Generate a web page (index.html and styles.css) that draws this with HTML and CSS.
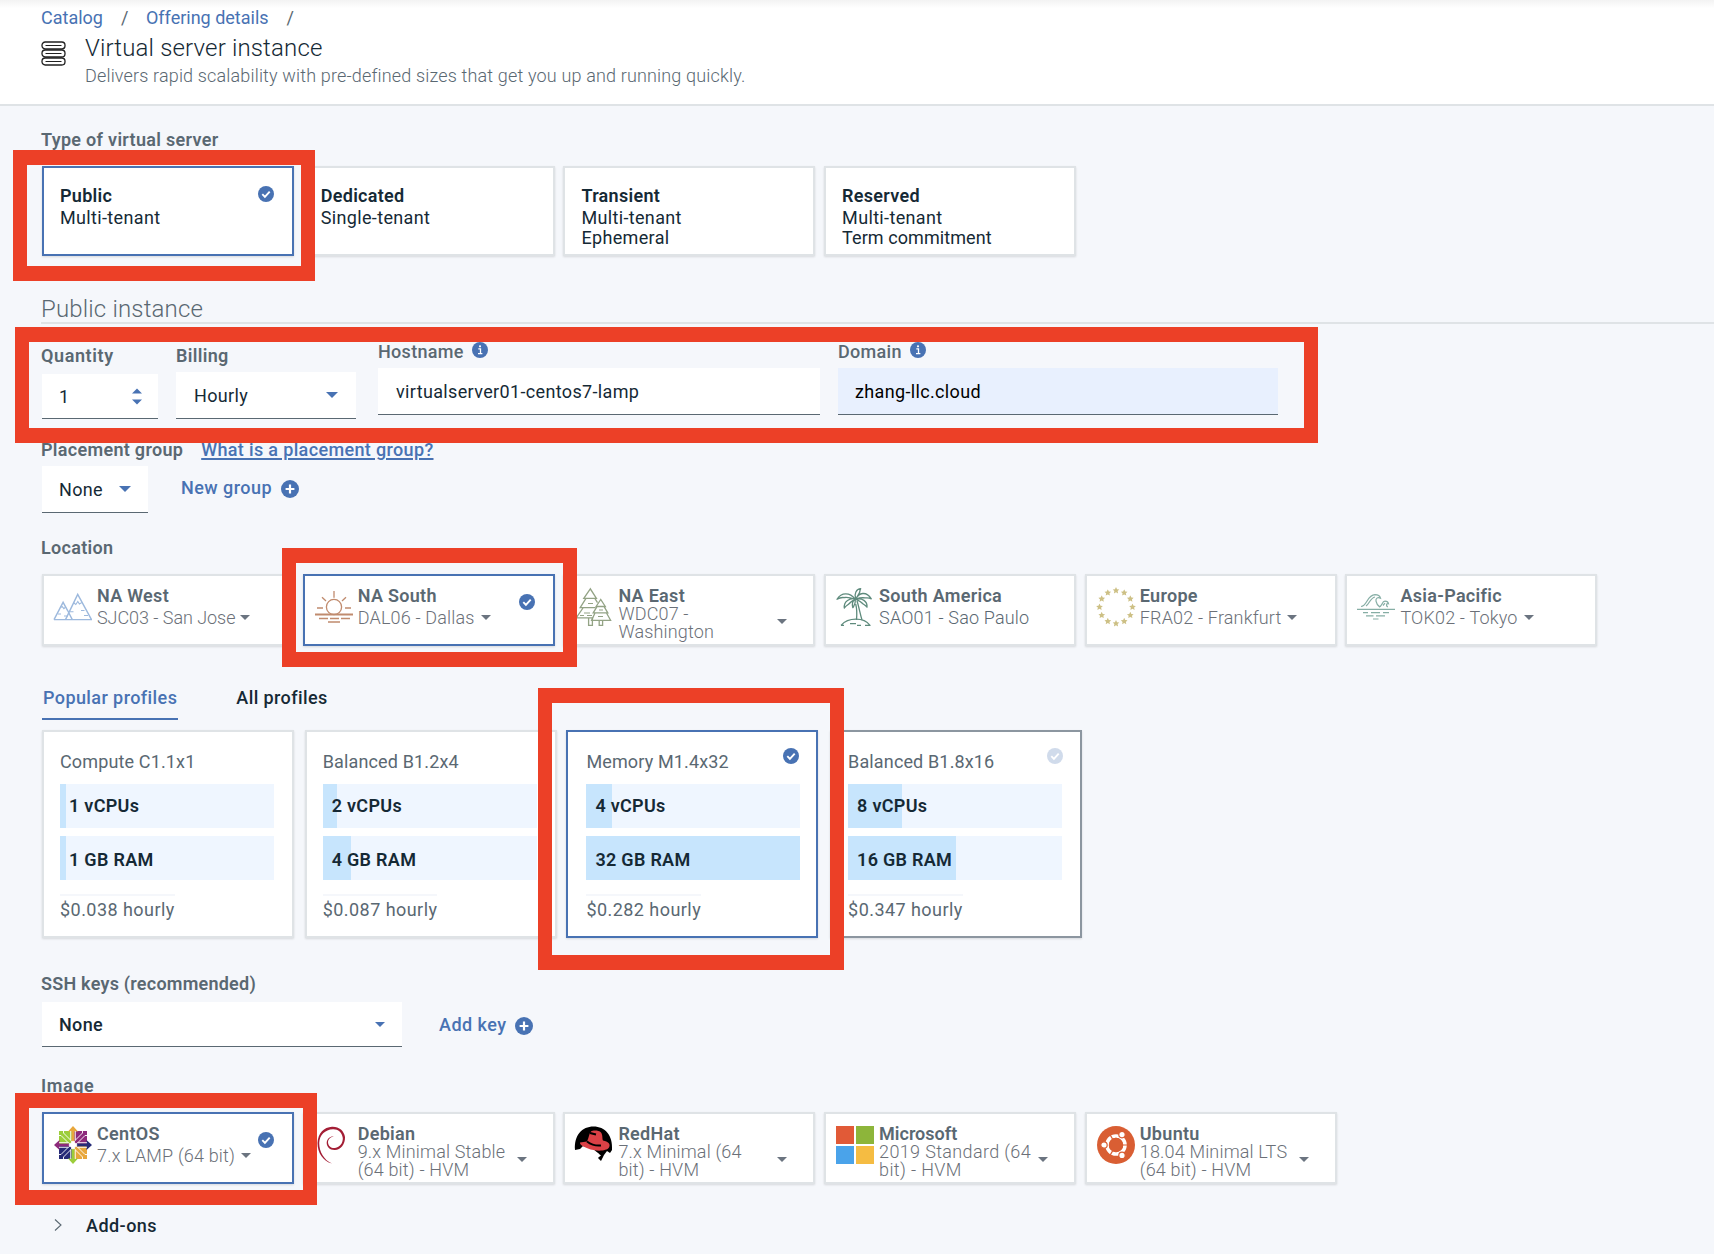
FILE: index.html
```html
<!DOCTYPE html>
<html lang="en">
<head>
<meta charset="utf-8">
<title>Virtual server instance</title>
<link rel="stylesheet" href="styles.css">
</head>
<body>
<svg class="defs" aria-hidden="true">
  <symbol id="check" viewBox="0 0 16 16"><circle cx="8" cy="8" r="8" fill="currentColor"/><path d="M4.3 8.2l2.6 2.6 4.8-5.2" fill="none" stroke="#fff" stroke-width="1.9"/></symbol>
  <symbol id="plus" viewBox="0 0 18 18"><circle cx="9" cy="9" r="9" fill="currentColor"/><path d="M9 4.6v8.8M4.6 9h8.800" stroke="#fff" stroke-width="2.2"/></symbol>
  <symbol id="info" viewBox="0 0 16 16"><circle cx="8" cy="8" r="8" fill="currentColor"/><path d="M6.3 6.9h2.2v4.6M6 11.6h4.4" fill="none" stroke="#fff" stroke-width="1.3"/><circle cx="8" cy="4.3" r="1.1" fill="#fff"/></symbol>
  <symbol id="caret" viewBox="0 0 12 6"><path d="M0 0h12L6 6z" fill="currentColor"/></symbol>
  <symbol id="star" viewBox="-3 -3 6 6"><path d="M0-3L.9-1.1 2.9-.9 1.4.5 1.8 2.5 0 1.5-1.8 2.5-1.4.5-2.9-.9-.9-1.1z" fill="currentColor"/></symbol>
</svg>
<div class="page">
  <header class="header">
    <nav class="crumbs"><a>Catalog</a><i>/</i><a>Offering details</a><i>/</i></nav>
    <div class="heading">
      <svg class="server" viewBox="0 0 25 25"><g fill="none" stroke="#222"><rect x="1" y="1" width="23" height="7" rx="3.2" stroke-width="1.3"/><rect x="1" y="9" width="23" height="7" rx="3.2" stroke-width="1.3"/><rect x="1" y="17" width="23" height="7" rx="3.2" stroke-width="1.3"/><path d="M4.5 4.5h16M4.5 12.5h16M4.5 20.5h16" stroke-width="1.1"/></g></svg>
      <div>
        <h1>Virtual server instance</h1>
        <p>Delivers rapid scalability with pre-defined sizes that get you up and running quickly.</p>
      </div>
    </div>
  </header>
  <main class="main">
    <h3 class="label">Type of virtual server</h3>
    <div class="cards types">
      <div class="card selected"><b>Public</b><span>Multi-tenant</span><svg class="check"><use href="#check"/></svg></div>
      <div class="card"><b>Dedicated</b><span>Single-tenant</span></div>
      <div class="card"><b>Transient</b><span>Multi-tenant</span><span>Ephemeral</span></div>
      <div class="card"><b>Reserved</b><span>Multi-tenant</span><span class="snug">Term commitment</span></div>
    </div>

    <h2>Public instance</h2>
    <div class="form">
      <div class="field quantity"><h3 class="label wide">Quantity</h3><div class="input"><em>1</em><span class="spin"><svg class="up"><use href="#caret"/></svg><svg><use href="#caret"/></svg></span></div></div>
      <div class="field billing"><h3 class="label">Billing</h3><div class="input"><em>Hourly</em><svg class="caret"><use href="#caret"/></svg></div></div>
      <div class="field hostname"><h3 class="label medium">Hostname<svg class="info"><use href="#info"/></svg></h3><div class="input"><em>virtualserver01-centos7-lamp</em></div></div>
      <div class="field domain"><h3 class="label medium">Domain<svg class="info"><use href="#info"/></svg></h3><div class="input"><em>zhang-llc.cloud</em></div></div>
    </div>
    <div class="labels"><h3 class="label">Placement group</h3><a class="help">What is a placement group?</a></div>
    <div class="row">
      <div class="input group"><em>None</em><svg class="caret"><use href="#caret"/></svg></div>
      <a class="action">New group<svg><use href="#plus"/></svg></a>
    </div>

    <h3 class="label location-label">Location</h3>
    <div class="cards tiles">
      <div class="card"><svg class="pic" viewBox="0 0 38 38"><g fill="none" stroke="#9db9dd" stroke-width="1.4"><path d="M0 31.6L9.1 14.3l4.4 8M11.5 31.6L23.7 6.4l13.8 25.2M13.5 22.3l4.8 9.3M0 31.6h38"/><path d="M6 19.5l2.3-.8 1.6 2 1.6-1.6M19.4 14.5l2.4 2 2-3 1.6 2.6 2.4-1.6M14 23.7h5.5M4 26h3M10 28h4M27 22.5h3.5M30 27.5h4" stroke-width="1.1"/></g></svg><div><b>NA West</b><p class="sub snug">SJC03 - San Jose<svg class="mini"><use href="#caret"/></svg></p></div></div>
      <div class="card selected"><svg class="pic" viewBox="0 0 38 38"><g fill="none" stroke="#c08b6e" stroke-width="1.3"><circle cx="19" cy="19" r="7.6"/><path d="M19 3v6.800M7 9.200l4 3.800M31 9.200L27 13M2 20h6M30 20h6"/><path d="M0 26.500h38" stroke-width="1.8"/><path d="M4 30.500h9M15 30.500h9M26 30.500h9M13 34h12"/></g></svg><div><b>NA South</b><p class="sub">DAL06 - Dallas<svg class="mini"><use href="#caret"/></svg></p></div><svg class="check"><use href="#check"/></svg></div>
      <div class="card"><svg class="pic" viewBox="0 0 38 38"><g fill="none" stroke="#93a385" stroke-width="1.3"><path d="M15.3.8L8.800 10.300h12.600zM10.800 10.600L5.200 19.600h15.300M20 10.600l2.500 4M8 20L1.200 29.800h17M13.600 30v7.400h3.800V30"/><path d="M25.700 11.500l-4.600 7h9.200zM22 18.600l-3.800 6.200h14.600l-3.700-6.200M20 25l-3.400 7.300h19L31.500 25M24.200 32.500v4.900h3.400v-4.900"/><path d="M13 15.500h5M9 25h6M5 27.500h4M12 27.500h5M23 28.500h5M24 22h4" stroke-width="1.1"/></g></svg><div><b>NA East</b><p class="sub two"><span>WDC07 -<br>Washington</span><svg class="mini"><use href="#caret"/></svg></p></div></div>
      <div class="card"><svg class="pic" viewBox="0 0 38 38"><g fill="none" stroke="#5f8b7d" stroke-width="1.3" stroke-linejoin="round"><path d="M19 11C14 4.500 5.500 4 1 11.300c4-2.600 6-1.600 7.500-1.800 3-.5 6.500.3 10.500 1.500zM19.500 11C14 9.800 7.500 13 8.300 20c2.300-3 3.700-2.800 5-4.500 1.400-1.800 3.700-3 6.200-4.500zM19.700 11c-2-5 .8-10.200 5-10.300-1.200 2-.4 3-1.600 4.600-1.200 1.900-1.800 3.400-3.400 5.700zM20 11c2.500-6.600 10.500-8 15.300-.2-3.200-1.400-4.500-.6-6.300-.9-3.200-.4-6 .1-9 1.100zM20 11.300c6-1.500 11.500 1.700 11 7.900-2-2.700-3.600-2.500-5-4.200-1.500-1.700-3.300-2.400-6-3.700zM19.300 11.500c-3.300 1.500-3.300 5-2.500 8.200 1.400-2.300 3-3.500 2.500-8.200zM21 13c2 6 3 12.500 5 19M19.700 16c1.300 5 1.300 10.500.8 16"/><path d="M5 37.400c3.500-4 8.500-6.200 15-6.200 6 0 11 2.200 14 6.200h-5M8 37.400H5M14 35.600h6M21 37.400h4"/></g></svg><div><b>South America</b><p class="sub dark">SAO01 - Sao Paulo</p></div></div>
      <div class="card"><svg class="pic stars" viewBox="0 0 38 38"><use href="#star" x="15.500" y="-1" width="7" height="7"/><use href="#star" x="23.700" y="1.200" width="7" height="7"/><use href="#star" x="29.800" y="7.300" width="7" height="7"/><use href="#star" x="32" y="15.500" width="7" height="7"/><use href="#star" x="29.800" y="23.700" width="7" height="7"/><use href="#star" x="23.700" y="29.800" width="7" height="7"/><use href="#star" x="15.500" y="32" width="7" height="7"/><use href="#star" x="7.300" y="29.800" width="7" height="7"/><use href="#star" x="1.200" y="23.700" width="7" height="7"/><use href="#star" x="-1" y="15.500" width="7" height="7"/><use href="#star" x="1.200" y="7.300" width="7" height="7"/><use href="#star" x="7.300" y="1.200" width="7" height="7"/></svg><div><b>Europe</b><p class="sub">FRA02 - Frankfurt<svg class="mini"><use href="#caret"/></svg></p></div></div>
      <div class="card"><svg class="pic" viewBox="0 0 38 38"><g fill="none" stroke="#86aea5" stroke-width="1.2"><path d="M4 18.500c6 0 6-11.500 14-11.800 3 0 5 1.500 5.500 3.500-3-1.500-5 .3-4.500 3 .4 3 2 4.500 4 6M9 18c3.500-2 4-8 9-9M22 18.800c3.500 0 2.500-5.600 6-5.600 2 0 3.200 1 3.500 2.600-2-.6-3 1.700-.7 3.200M26 17.500l2-2.300"/><path d="M0 21.400h38M6 24.700h5M14 24.700h9M26 24.700h6M9 27.800h7.500M19 27.800h9M16 31h5.500"/></g></svg><div><b>Asia-Pacific</b><p class="sub">TOK02 - Tokyo<svg class="mini"><use href="#caret"/></svg></p></div></div>
    </div>

    <div class="tabs"><a class="active">Popular profiles</a><a>All profiles</a></div>
    <div class="cards profiles">
      <div class="card"><h4>Compute C1.1x1</h4><div class="bar"><i style="width:6px"></i><b>1 vCPUs</b></div><div class="bar"><i style="width:6px"></i><b>1 GB RAM</b></div><p>$0.038 hourly</p></div>
      <div class="card"><h4>Balanced B1.2x4</h4><div class="bar"><i style="width:14px"></i><b>2 vCPUs</b></div><div class="bar"><i style="width:28px"></i><b>4 GB RAM</b></div><p>$0.087 hourly</p></div>
      <div class="card selected"><h4>Memory M1.4x32</h4><div class="bar"><i style="width:26px"></i><b>4 vCPUs</b></div><div class="bar"><i style="width:214px"></i><b>32 GB RAM</b></div><p>$0.282 hourly</p><svg class="check"><use href="#check"/></svg></div>
      <div class="card hover"><h4>Balanced B1.8x16</h4><div class="bar"><i style="width:54px"></i><b>8 vCPUs</b></div><div class="bar"><i style="width:108px"></i><b>16 GB RAM</b></div><p>$0.347 hourly</p><svg class="check"><use href="#check"/></svg></div>
    </div>

    <h3 class="label ssh-label">SSH keys (recommended)</h3>
    <div class="row ssh">
      <div class="input"><em>None</em><svg class="caret"><use href="#caret"/></svg></div>
      <a class="action">Add key<svg><use href="#plus"/></svg></a>
    </div>

    <h3 class="label wide image-label">Image</h3>
    <div class="cards tiles">
      <div class="card selected"><svg class="pic" viewBox="0 0 38 38"><path d="M5 5h13.500v13.500H5z" fill="#9ccd3a"/><path d="M19.500 5H33v13.500H19.500z" fill="#8d2a7b"/><path d="M5 19.500h13.500V33H5z" fill="#262b77"/><path d="M19.500 19.500H33V33H19.500z" fill="#e8a73c"/><path d="M19 0l5 5.500h-3.500V17h-3V5.500H14z" fill="#e8a73c"/><path d="M19 38l5-5.500h-3.500V21h-3v11.500H14z" fill="#9ccd3a"/><path d="M0 19l5.500-5v3.500H17v3H5.500V24z" fill="#8d2a7b"/><path d="M38 19l-5.500-5v3.500H21v3h11.500V24z" fill="#262b77"/><g fill="none" stroke="#fff" stroke-width=".9"><path d="M16.700 5v9.500L19 17l2.300-2.500V5M16.700 33v-9.500L19 21l2.300 2.500V33M5 16.700h9.500L17 19l-2.500 2.300H5M33 16.700h-9.500L21 19l2.500 2.300H33"/><path d="M9.500 5v2l7 7M5 9.500h2l7 7M28.500 5v2l-7 7M33 9.500h-2l-7 7M9.500 33v-2l7-7M5 28.500h2l7-7M28.500 33v-2l-7-7M33 28.500h-2l-7-7"/></g><path d="M19 14.500l4.500 4.500-4.500 4.500-4.500-4.500z" fill="#fff"/></svg><div><b>CentOS</b><p class="sub">7.x LAMP (64 bit)<svg class="mini"><use href="#caret"/></svg></p></div><svg class="check"><use href="#check"/></svg></div>
      <div class="card"><svg class="pic" viewBox="0 0 38 38"><path d="M17 37.600C8 35 2.500 27 2.500 17 3 7 9 1 17 .700c7-.3 12 4 13 10.300.4 7-4.500 13-10 13-5.500.2-8.500-3.500-8.300-7.500.3-4 3.800-6.500 7.300-6.300-3 .4-5.800 2.800-6 6 .2 4 3.500 6.300 7 5.800 5-.8 8-5 7.800-10C27 6 23 3 18 3.200 10 3.500 4.500 9 4.200 17c0 9 4.800 17 12.800 20.600z" fill="#a31e35"/></svg><div><b>Debian</b><p class="sub two"><span>9.x Minimal Stable<br>(64 bit) - HVM</span><svg class="mini"><use href="#caret"/></svg></p></div></div>
      <div class="card"><svg class="pic" viewBox="0 0 38 38"><path d="M0 24C-1 9 7 .500 18.500.500S38 9 37 24l-2 3-3-2-3 4-3 6-3-3 1-4-7-6-9-2-3 3z"/><path d="M5 16.500l7-1c2-4 2-8 4-10 2-1.500 8-1.300 10 1 2 3 1 6 2 8 5 1 8 3.500 6 7-2.500 4-14 4-21 1-5-2-8-3.500-8-6z" fill="#dc4146"/><path d="M12 15.500c4 3 9 4.500 14 4M15 7l6 1.500" fill="none" stroke="#000" stroke-width="2"/><path d="M8 23l14 3.500 4 3-4 3-8 3-9-7z" fill="#fff"/></svg><div><b>RedHat</b><p class="sub two"><span>7.x Minimal (64<br>bit) - HVM</span><svg class="mini"><use href="#caret"/></svg></p></div></div>
      <div class="card"><svg class="pic" viewBox="0 0 38 38"><path d="M0 0h18v18H0z" fill="#e15a37"/><path d="M20 0h18v18H20z" fill="#8db53a"/><path d="M0 20h18v18H0z" fill="#4aa3ea"/><path d="M20 20h18v18H20z" fill="#f5bc42"/></svg><div><b class="snug">Microsoft</b><p class="sub two loose"><span>2019 Standard (64<br>bit) - HVM</span><svg class="mini"><use href="#caret"/></svg></p></div></div>
      <div class="card"><svg class="pic" viewBox="0 0 38 38"><circle cx="19" cy="19" r="19" fill="#d95e33"/><circle cx="19" cy="19" r="9" fill="none" stroke="#fff" stroke-width="3.600"/><g stroke="#d95e33" stroke-width="1.200"><path d="M19 19h12M19 19L13 8.600M19 19l-6 10.400"/><circle cx="7" cy="19" r="3.200" fill="#fff"/><circle cx="25" cy="8.600" r="3.200" fill="#fff"/><circle cx="25" cy="29.400" r="3.200" fill="#fff"/></g><circle cx="19" cy="19" r="7.200" fill="#d95e33"/></svg><div><b>Ubuntu</b><p class="sub two"><span>18.04 Minimal LTS<br>(64 bit) - HVM</span><svg class="mini"><use href="#caret"/></svg></p></div></div>
    </div>
    <div class="addons"><svg viewBox="0 0 8 12"><path d="M1 .500L7 6l-6 5.500" fill="none" stroke="#5a6872" stroke-width="1.100"/></svg>Add-ons</div>
  </main>
  <div class="mark m1"></div><div class="mark m2"></div><div class="mark m3"></div><div class="mark m4"></div><div class="mark m5"></div>
</div>
</body>
</html>
```
FILE: styles.css
```css
* { box-sizing: border-box; margin: 0; padding: 0; }
body { background: #f5f7fb; color: #152935; font: 400 18px/22px Roboto, "Liberation Sans", sans-serif; letter-spacing: .35px; }
em, i { font-style: normal; }
b, h3 { font-weight: 600; letter-spacing: .3px; }
svg { display: block; flex: none; overflow: visible; }
.defs { position: absolute; width: 0; height: 0; overflow: hidden; }
.page { position: relative; width: 1714px; height: 1254px; overflow: hidden; }

.header { height: 106px; padding: 7px 41px 0; border-bottom: 2px solid #dfe3e6; background: linear-gradient(#f3f3f3, #fff 8px); letter-spacing: .16px; }
.crumbs { display: flex; color: #4872b3; letter-spacing: 0; }
.crumbs i { width: 43px; padding-left: 18px; color: #5a6872; }
.heading { display: flex; gap: 19px; margin-top: 5px; }
.server { width: 25px; height: 25px; margin-top: 7px; }
h1 { font-size: 24px; line-height: 28px; font-weight: 300; }
.heading p { margin-top: 3px; font-weight: 300; color: #5a6872; }

.main { padding: 23px 0 0 42px; }
.label { display: flex; margin-left: -1px; font-size: 18px; color: #5a6872; }
.label.medium { font-weight: 500; }
.label.wide { letter-spacing: .6px; }
.cards { display: flex; gap: 8.7px; margin-top: 15px; }
.card { position: relative; flex: none; width: 252px; border: 2px solid #dfe3e6; background: #fff; box-shadow: 0 1px 2px rgba(0, 0, 0, .12); }
.card.selected { border-color: #4872b3; }
.card.hover { border-color: #8c96a0; }
.check { position: absolute; width: 16px; height: 16px; right: 18px; top: 18px; color: #4872b3; }
.types .card { height: 90px; padding: 17px 16px 0; }
.types b, .types span { display: block; }
.types b { margin-bottom: 1px; }
.types span { line-height: 20px; }
.types .snug { letter-spacing: .08px; }

h2 { height: 29px; margin: 39px 0 0 -1px; font-size: 24px; line-height: 28px; font-weight: 300; letter-spacing: .16px; color: #5a6872; border-bottom: 2px solid #dfe3e6; }
.form { display: flex; height: 95px; align-items: flex-start; }
.input { display: flex; align-items: center; justify-content: space-between; height: 47px; padding: 0 17px; background: #fff; border-bottom: 1px solid #5a6872; }
.input em { padding-top: 1px; }
.quantity { width: 116px; margin: 21px 18px 0 0; }
.quantity .input { height: 45px; margin-top: 7px; padding-right: 16px; }
.spin { display: flex; flex-direction: column; gap: 5px; }
.spin svg { width: 10px; height: 6px; color: #4872b3; }
.spin .up { transform: scaleY(-1); }
.billing { width: 180px; margin: 21px 22px 0 0; }
.billing .label, .hostname .label, .domain .label { margin-left: 0; }
.billing .input { margin-top: 5px; padding: 0 18px; }
.caret { width: 12px; height: 6px; color: #4872b3; }
.hostname { width: 442px; margin: 17px 18px 0 0; }
.domain { width: 440px; margin-top: 17px; }
.hostname .input, .domain .input { margin-top: 5px; }
.hostname .input { padding-left: 18px; }
.domain .input { background: #e8f0fe; color: #000; }
.info { width: 16px; height: 16px; margin: 1px 0 0 8px; color: #4872b3; }
.labels { display: flex; gap: 18px; margin-top: 20px; }
.help { font-weight: 500; color: #4872b3; text-decoration: underline; text-decoration-thickness: 2px; text-underline-offset: 2px; }
.row { display: flex; margin-top: 5px; }
.group { width: 106px; }
.action { display: flex; gap: 9px; margin: 11px 0 0 33px; font-weight: 500; letter-spacing: .45px; color: #4872b3; }
.action svg { width: 18px; height: 18px; margin-top: 3px; }

.location-label { margin-top: 24px; }
.tiles .card { display: flex; gap: 5px; height: 72px; padding: 9px 0 0 10px; }
.tiles b { display: block; color: #5a6872; }
.tiles b.snug { letter-spacing: 0; }
.pic { width: 38px; height: 38px; margin-top: 3px; }
.stars { color: #cdc085; }
.sub { display: flex; gap: 6px; margin-top: 1px; line-height: 20px; font-weight: 300; letter-spacing: .17px; color: #6b7078; white-space: nowrap; }
.sub.dark { color: #5a6872; }
.sub.snug { gap: 5px; letter-spacing: -.05px; }
.sub.loose { letter-spacing: .35px; }
.sub.two { gap: 9px; margin-top: -2px; line-height: 18px; }
.sub.two span { width: 150px; }
.mini { width: 10px; height: 5px; margin-top: 7px; color: #6b7480; }
.two .mini { margin-top: 14px; }

.tabs { display: flex; gap: 57px; height: 33px; margin-top: 41px; }
.tabs a { padding: 0 1px; font-weight: 500; letter-spacing: .41px; }
.tabs .active { color: #4872b3; border-bottom: 2px solid #4872b3; }
.profiles { gap: 10.7px; margin-top: 10px; }
.profiles .card { height: 208px; padding: 19px 18px 0 16px; }
.profiles .selected { margin: 0 1px 0 -1px; padding: 19px 16px 0 18px; }
.profiles .check { top: 16px; right: 17px; }
h4 { margin-bottom: 11px; font-weight: 400; letter-spacing: .14px; color: #5a6872; }
.bar { display: grid; height: 44px; margin-bottom: 8px; background: #eff6ff; }
.bar i, .bar b { grid-area: 1 / 1; }
.bar i { background: #c7e5fd; }
.bar b { padding: 11px 0 0 9px; }
.bar + .bar b { padding-top: 13px; }
.profiles p { width: max-content; margin-top: 14px; padding-top: 3px; border-top: 2px solid #f5f7fb; letter-spacing: .45px; color: #5a6872; }
.hover .check { opacity: .25; }

.ssh-label { margin-top: 35px; letter-spacing: .23px; }
.ssh { margin-top: 7px; }
.ssh .input { width: 360px; height: 45px; font-weight: 500; }
.ssh .caret { width: 10px; height: 5px; }
.ssh .action { margin: 12px 0 0 37px; }
.image-label { margin-top: 28px; }
.addons { display: flex; gap: 24px; margin: 31px 0 0 12px; font-weight: 500; letter-spacing: .45px; }
.addons svg { width: 8px; height: 12px; margin-top: 4px; }

.mark { position: absolute; border: 15px solid #ec4027; border-left-width: 14px; border-right-width: 14px; }
.m1 { left: 13px; top: 150px; width: 302px; height: 131px; }
.m2 { left: 15px; top: 327px; width: 1303px; height: 116px; }
.m3 { left: 282px; top: 548px; width: 295px; height: 119px; }
.m4 { left: 538px; top: 688px; width: 306px; height: 282px; }
.m5 { left: 15px; top: 1093px; width: 302px; height: 112px; }
```
